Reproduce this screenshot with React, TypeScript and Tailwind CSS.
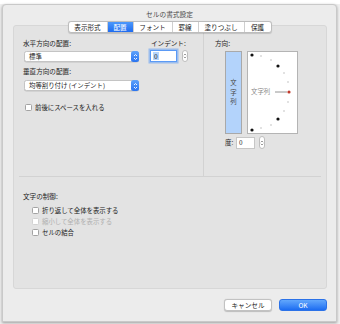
import React from 'react'

const jp = { fontFamily: '"Noto Sans CJK JP", "Liberation Sans", sans-serif' }

function Chevrons({ color = '#fff' }: { color?: string }) {
  return (
    <svg width="5" height="8" viewBox="0 0 5 8">
      <path d="M1 3 L2.5 1.5 L4 3" fill="none" stroke={color} strokeWidth="0.9" />
      <path d="M1 5 L2.5 6.5 L4 5" fill="none" stroke={color} strokeWidth="0.9" />
    </svg>
  )
}

function Select({ label, w }: { label: string; w: string }) {
  return (
    <div className={`${w} h-[11px] flex items-center bg-white rounded-[2.5px] border border-[#c4c4c4] shadow-[0_0.5px_0.5px_rgba(0,0,0,0.15)]`}>
      <span className="flex-1 pl-[4px] text-[6.4px] leading-[9px] text-[#222] whitespace-nowrap">{label}</span>
      <span className="w-[8px] h-[11px] -mr-[1px] rounded-[2.5px] bg-gradient-to-b from-[#5ea2fb] to-[#2a74f0] flex items-center justify-center">
        <Chevrons />
      </span>
    </div>
  )
}

function Stepper({ h }: { h: string }) {
  return (
    <div className={`w-[6px] ${h} rounded-full bg-white border border-[#bdbdbd] flex items-center justify-center`}>
      <Chevrons color="#777" />
    </div>
  )
}

function Check({ label, disabled }: { label: string; disabled?: boolean }) {
  return (
    <div className="flex items-center h-[11px]">
      <span
        className={`w-[7px] h-[7px] rounded-[1.5px] border bg-white ${disabled ? 'border-[#d2d2d2] bg-[#f3f3f3]' : 'border-[#a3a3a3]'}`}
      />
      <span className={`ml-[3px] text-[6.4px] leading-[9px] ${disabled ? 'text-[#b0b0b0]' : 'text-[#222]'}`}>{label}</span>
    </div>
  )
}

const tabs = [
  { name: '表示形式', w: 'w-[39px]' },
  { name: '配置', w: 'w-[26px]', active: true },
  { name: 'フォント', w: 'w-[39px]' },
  { name: '罫線', w: 'w-[26px]' },
  { name: '塗りつぶし', w: 'w-[46px]' },
  { name: '保護', w: 'w-[26px]' },
]

export default function App() {
  return (
    <div className="relative w-[340px] h-[324px] overflow-hidden bg-[#f0f0f0]" style={jp}>
      {/* background sheet */}
      <div className="h-[4px] bg-white" />

      {/* Dialog window */}
      <div className="absolute left-[2px] top-[4px] w-[335px] h-[318px] bg-[#ececec] border border-[#c9c9c9] rounded-t-[4px] shadow-[0_1px_3px_rgba(0,0,0,0.35)]">
        {/* title */}
        <div className="h-[16px] flex justify-center pt-[5px]">
          <span className="text-[6.7px] leading-[9px] text-[#4a4a4a]">セルの書式設定</span>
        </div>

        {/* tabs */}
        <div className="relative z-10 flex justify-center">
          <div className="flex h-[12px] bg-white border border-[#bdbdbd] rounded-[3px] shadow-[0_0.5px_1px_rgba(0,0,0,0.15)] overflow-hidden">
            {tabs.map((t, i) => (
              <div
                key={t.name}
                className={`${t.w} flex items-center justify-center text-[6.6px] leading-[9px] ${
                  i < tabs.length - 1 ? 'border-r border-[#cfcfcf]' : ''
                } ${t.active ? 'bg-gradient-to-b from-[#4d98fb] to-[#1f6cf0] text-white' : 'text-[#222]'}`}
              >
                {t.name}
              </div>
            ))}
          </div>
        </div>

        {/* panel */}
        <div className="ml-[10px] -mt-[8px] w-[314px] h-[264px] bg-[#e3e3e3] border border-[#d7d7d7] rounded-[3px]">
          <div className="flex h-[150px]">
            {/* left column */}
            <div className="w-[189px] pl-[9px] pt-[13px]">
              <div className="flex">
                <div className="w-[116px]">
                  <div className="text-[6.6px] leading-[9px] text-[#222]">水平方向の配置:</div>
                  <div className="mt-[3px] ml-[1px]">
                    <Select label="標準" w="w-[115px]" />
                  </div>
                </div>
                <div className="ml-[11px]">
                  <div className="ml-[1px] text-[6.6px] leading-[9px] text-[#222]">インデント:</div>
                  <div className="mt-[2px] flex items-center">
                    <div className="w-[27px] h-[12px] bg-white border border-[#5b9af5] shadow-[0_0_0_1.5px_rgba(96,158,245,0.55)] flex items-center pl-[2px]">
                      <span className="bg-[#b4d5fd] text-[6.6px] leading-[8px] text-[#222] px-[1px]">0</span>
                    </div>
                    <div className="ml-[5px]">
                      <Stepper h="h-[12px]" />
                    </div>
                  </div>
                </div>
              </div>
              <div className="mt-[5px] text-[6.6px] leading-[9px] text-[#222]">垂直方向の配置:</div>
              <div className="mt-[4px] ml-[1px]">
                <Select label="均等割り付け (インデント)" w="w-[115px]" />
              </div>
              <div className="mt-[11px] ml-[2px]">
                <Check label="前後にスペースを入れる" />
              </div>
            </div>

            {/* right column */}
            <div className="flex-1 border-l border-[#d2d2d2] pl-[11px] pt-[13px]">
              <div className="text-[6.6px] leading-[9px] text-[#222]">方向:</div>
              <div className="mt-[3px] ml-[10px] flex">
                <div className="w-[17px] h-[83px] bg-[#b3d3fb] border border-[#a9a9a9] flex flex-col items-center justify-center text-[6.4px] leading-[9.5px] text-[#4a4a4a]">
                  <span>文</span>
                  <span>字</span>
                  <span>列</span>
                </div>
                <div className="relative ml-[5px] w-[51px] h-[83px] bg-white border border-[#b4b4b4]">
                  <svg className="absolute left-0 top-0" width="49" height="81" viewBox="0 0 49 81">
                    {[
                      [13, 4], [23, 8], [36, 21], [40, 30], [40, 50], [36, 59], [23, 73], [13, 76],
                    ].map(([x, y], i) => (
                      <rect key={i} x={x - 0.5} y={y - 0.5} width="1" height="1" fill="#8a8a8a" />
                    ))}
                    {[
                      [4, 3], [30, 14], [30, 67], [4, 78],
                    ].map(([x, y], i) => (
                      <circle key={i} cx={x} cy={y} r="1.6" fill="#111" />
                    ))}
                    <line x1="27" y1="40" x2="39" y2="40" stroke="#7a7a7a" strokeWidth="0.8" />
                    <circle cx="41" cy="40" r="1.6" fill="#c0392b" />
                  </svg>
                  <span className="absolute left-[3px] top-[35px] text-[6.4px] leading-[9px] text-[#8a8a8a]">文字列</span>
                </div>
              </div>
              <div className="mt-[2px] ml-[10px] flex items-center">
                <span className="w-[11px] text-[6.4px] leading-[9px] text-[#222]">度:</span>
                <div className="w-[19px] h-[12px] bg-white border border-[#c6c6c6] flex items-center pl-[2px] text-[6.4px] leading-[9px] text-[#222]">
                  0
                </div>
                <div className="ml-[4px]">
                  <Stepper h="h-[13px]" />
                </div>
              </div>
            </div>
          </div>

          <div className="mx-[5px] border-t border-[#d2d2d2]" />

          <div className="pl-[9px] pt-[15px]">
            <div className="text-[6.6px] leading-[9px] text-[#222]">文字の制御:</div>
            <div className="mt-[4px] pl-[9px]">
              <Check label="折り返して全体を表示する" />
              <Check label="縮小して全体を表示する" disabled />
              <Check label="セルの結合" />
            </div>
          </div>
        </div>

        {/* buttons */}
        <div className="mt-[10px] ml-[221px] flex gap-[7px]">
          <div className="w-[48px] h-[12px] bg-white border border-[#c2c2c2] rounded-[3px] shadow-[0_0.5px_1px_rgba(0,0,0,0.2)] flex items-center justify-center text-[6.6px] leading-[9px] text-[#222]">
            キャンセル
          </div>
          <div className="w-[48px] h-[12px] bg-gradient-to-b from-[#62a7fc] to-[#1c6cf1] border border-[#2b72e8] rounded-[3px] flex items-center justify-center text-[6.6px] leading-[9px] text-white">
            OK
          </div>
        </div>
      </div>
    </div>
  )
}
